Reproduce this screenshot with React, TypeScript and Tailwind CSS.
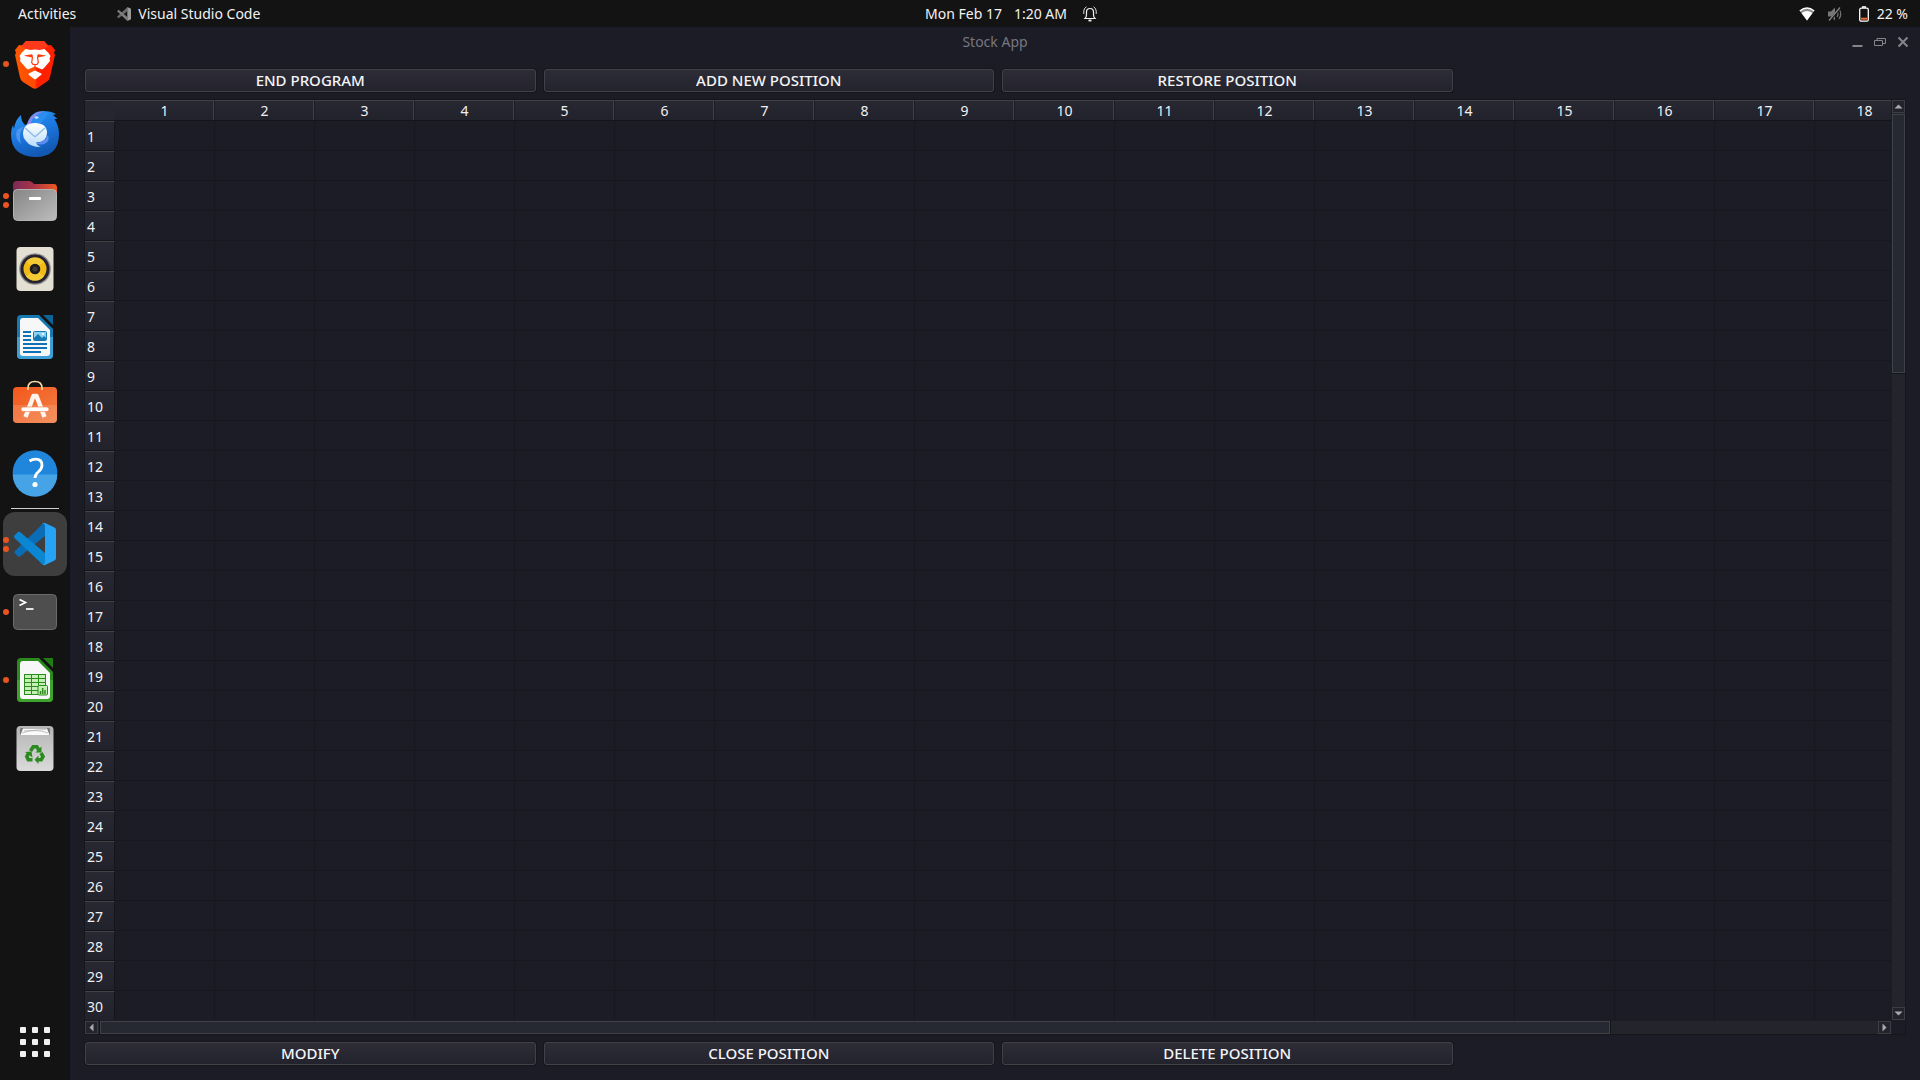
import type { ReactNode } from "react";

const columns = Array.from({ length: 18 }, (_, i) => i + 1);
const rows = Array.from({ length: 30 }, (_, i) => i + 1);

function Icon({ children }: { children: ReactNode }) {
  return (
    <svg viewBox="0 0 48 48" className="size-12 overflow-visible" aria-hidden="true">
      {children}
    </svg>
  );
}

function BraveIcon() {
  return (
    <Icon>
      <defs>
        <linearGradient id="brave" x1="0" x2="1" y1="0" y2="0">
          <stop offset="0.1" stopColor="#ff5500" />
          <stop offset="0.5" stopColor="#ff4a00" />
          <stop offset="0.55" stopColor="#ff2000" />
          <stop offset="1" stopColor="#ff2000" />
        </linearGradient>
      </defs>
      <path
        d="M15 1h18l4 4.500 3-.5 4 5-1 3 1 2-5 22q-.6 3-3 4.500l-9.500 6.500q-2.500 1.500-5 0L12 42q-2.400-1.500-3-4.500L4 15l1-2-1-3 4-5 3 .5z"
        fill="url(#brave)"
      />
      <path d="M15 1h18l4 4.500h2L33 9l-9 1-9-1-6-3.500h2z" fill="#ff3a1c" />
      <path
        d="M14.500 9l5 1q4.500-1 9 0l5-1 4 4 2 3-1 2.500.5 2.500-6 7-2 1.500L24 26.500l-7 3-2-1.500-6-7 .5-2.500-1-2.500 2-3z"
        fill="#fff"
      />
      <path d="M24 30.500l6.300 3q.5.600 0 1.200L25 39q-1 .7-2 0l-5.300-4.300q-.5-.6 0-1.200z" fill="#fff" />
      <path
        d="M13 15.500l8-1.200 1 1.700-.6 1.500-6.400-1.200zM35 15.500l-8-1.200-1 1.700.6 1.500 6.400-1.200z"
        fill="#ff3a0c"
      />
      <path
        d="M21.500 17l-.8 5.500 1.300 2h4l1.300-2-.8-5.500M24 24.500v3"
        fill="none"
        stroke="#ff3a0c"
        strokeWidth="1.200"
      />
    </Icon>
  );
}

function ThunderbirdIcon() {
  return (
    <Icon>
      <defs>
        <linearGradient id="bird" x1="0" x2="0.4" y1="0" y2="1">
          <stop offset="0" stopColor="#2f9bf5" />
          <stop offset="0.55" stopColor="#1b77df" />
          <stop offset="1" stopColor="#1259b4" />
        </linearGradient>
        <linearGradient id="mail" x1="0" x2="0" y1="0" y2="1">
          <stop offset="0" stopColor="#fff" />
          <stop offset="1" stopColor="#b9dcfa" />
        </linearGradient>
      </defs>
      <path
        d="M16 16Q20 3 32 3q8 0 13 3l-3 1 4.500 4h-3q4.500 7 4.500 15 0 23-24 23Q0 48 0 26q0-5 2-9l1 4Q4 12 10 7q0 6 4 10z"
        fill="url(#bird)"
      />
      <path d="M16 17Q20 3 33 3.500 25 6 21 12l-2 6z" fill="#8f86ea" />
      <path d="M20 15Q24 5 34 4l4 1-8 10z" fill="#2b8df0" />
      <path d="M6 22q-3 8 4 14-2-8 0-13l3-5z" fill="#5b9bf0" opacity=".8" />
      <path d="M37 27q-3 8-13 8 6 3 11 0 4-3 2-8z" fill="#5e8cf0" />
      <path d="M12 26q0-11 12-11 12 0 12 10 0 9-11 9.500 1 3 5 4.500-11 0-15-6-3-3-3-7z" fill="url(#mail)" />
      <path d="M14 20l9 8q1 1 2 0l9-8" fill="none" stroke="#8fb9e6" strokeWidth="1.300" />
      <ellipse cx="25.500" cy="9.500" rx="2" ry="1.300" fill="#bfe6ff" />
    </Icon>
  );
}

function FilesIcon() {
  return (
    <Icon>
      <defs>
        <linearGradient id="folder" x1="0" x2="1" y1="0" y2="0">
          <stop offset="0" stopColor="#7b2a55" />
          <stop offset="0.45" stopColor="#a8344a" />
          <stop offset="1" stopColor="#f0591e" />
        </linearGradient>
        <linearGradient id="drawer" x1="0" x2="1" y1="0" y2="1">
          <stop offset="0" stopColor="#858585" />
          <stop offset="1" stopColor="#bdbdbd" />
        </linearGradient>
      </defs>
      <path d="M2 9q0-4 4-4h12q2 0 3.500 1.500L23 8h20q3 0 3 4v10H2z" fill="url(#folder)" />
      <rect x="2.500" y="13.500" width="43" height="31" rx="4" fill="url(#drawer)" stroke="#b4b4b4" />
      <rect x="18" y="21" width="12" height="3" rx="1" fill="#fff" />
    </Icon>
  );
}

function RhythmboxIcon() {
  return (
    <Icon>
      <rect x="5.500" y="3" width="37" height="44" rx="4" fill="#e4dfd3" />
      <circle cx="24" cy="25" r="15.800" fill="#8d8c8c" />
      <circle cx="24" cy="25" r="14.500" fill="#25232f" />
      <circle cx="24" cy="25" r="11.500" fill="#f0bb17" />
      <path d="M24 25L15 17.500a11.500 11.500 0 0 1 18 0zM24 25l9 7.500a11.500 11.500 0 0 1-18 0z" fill="#f9d64a" opacity=".6" />
      <circle cx="24" cy="25" r="5.300" fill="#1d1c1c" />
      <circle cx="24" cy="25" r="2.500" fill="#3e3c3c" />
    </Icon>
  );
}

function WriterIcon() {
  return (
    <Icon>
      <path d="M10 3h18l14 14v26q0 4-4 4H10q-4 0-4-4V7q0-4 4-4z" fill="#1679b3" />
      <path d="M6 25h36v18q0 4-4 4H10q-4 0-4-4z" fill="#3d9fd6" />
      <path d="M12 6h15l12 12v23q0 3-3 3H12q-3 0-3-3V9q0-3 3-3z" fill="#f7f7f7" />
      <path d="M32 3h10v10z" fill="#0d6496" />
      <path d="M12 20h8M12 24h8M12 28h8M12 32h24M12 36h24M12 40h18" stroke="#0d72b8" strokeWidth="2" />
      <rect x="22.500" y="19.500" width="13" height="9" rx="1" fill="#8bd0f5" stroke="#1679b3" />
      <path d="M23 28v-2l4-4 4 4 2-2 2 2v2z" fill="#1679b3" />
      <circle cx="32" cy="22" r="1" fill="#fff" />
    </Icon>
  );
}

function SoftwareIcon() {
  return (
    <Icon>
      <defs>
        <linearGradient id="bag" x1="0" x2="1" y1="0" y2="1">
          <stop offset="0" stopColor="#f4571c" />
          <stop offset="1" stopColor="#f08045" />
        </linearGradient>
      </defs>
      <rect x="2" y="7" width="44" height="36" rx="4" fill="url(#bag)" />
      <path d="M2 25h44v14q0 4-4 4H6q-4 0-4-4z" fill="#fff" opacity=".13" />
      <path d="M17 10V8q0-6.500 7-6.500T31 8v2" fill="none" stroke="#f7dba5" strokeWidth="1.600" />
      <path d="M14.500 37l8-21h3l8 21" fill="none" stroke="#fff4ee" strokeWidth="4.500" strokeLinejoin="round" />
      <rect x="10" y="27" width="28" height="4.500" rx="2.200" fill="#fff" stroke="#f2743c" strokeWidth=".6" />
    </Icon>
  );
}

function HelpIcon() {
  return (
    <Icon>
      <circle cx="24" cy="24.500" r="22.300" fill="#2086dc" />
      <path d="M1.700 26.500h44.600A22.300 22.300 0 0 1 1.700 26.500z" fill="#45a3e6" />
      <path
        d="M18.500 13q3-1.800 6-1.800 6.500 0 6.500 6 0 3.600-3.800 6.800-3.200 2.700-3.200 6"
        fill="none"
        stroke="#fff"
        strokeWidth="2.800"
      />
      <circle cx="24" cy="36.500" r="2.600" fill="#fff" />
    </Icon>
  );
}

function CodeIcon() {
  return (
    <Icon>
      <path d="M3 32l4 4.500q1 .7 2 0L34 16V3.500L31.500 4z" fill="#0a6db5" />
      <path d="M3 16l4-4q1-.7 2 0L34 33v12l-3-1L3.500 18q-1-1 0-2z" fill="#0a86d3" />
      <path d="M34 3l9.500 4.500q1.500.8 1.500 2.500v28q0 1.700-1.500 2.500L34 45q-2 .5-3-1 3 1 3-2V6q0-3-3-2 1-1.500 3-1z" fill="#27a3f5" />
    </Icon>
  );
}

function TerminalIcon() {
  return (
    <Icon>
      <rect x="2.500" y="6.500" width="43" height="35" rx="4" fill="#4e4e4e" stroke="#6b6b6b" />
      <path d="M8.500 11.500l6 3-6 3" fill="none" stroke="#fff" strokeWidth="1.700" />
      <path d="M15 21h7.500" stroke="#fff" strokeWidth="1.700" />
    </Icon>
  );
}

function CalcIcon() {
  return (
    <Icon>
      <path d="M10 2h18l14 14v26q0 4-4 4H10q-4 0-4-4V6q0-4 4-4z" fill="#2a8a1c" />
      <path d="M6 24h36v18q0 4-4 4H10q-4 0-4-4z" fill="#3da32b" />
      <path d="M12 5h15l12 12v23q0 3-3 3H12q-3 0-3-3V8q0-3 3-3z" fill="#f7f7f7" />
      <path d="M32 2h10v10z" fill="#1f7d14" />
      <rect x="13.500" y="18.500" width="21" height="20" fill="#c4f0b5" stroke="#2a8a1c" />
      <path d="M13 22.500h22M13 26.500h22M13 30.500h22M13 34.500h22M20.500 18v21M27.500 18v21" stroke="#2a8a1c" />
      <rect x="27" y="29.500" width="9.500" height="9.500" rx="1" fill="#c4f0b5" stroke="#2a8a1c" />
      <path d="M29.500 38v-3M31.700 38v-6M34 38v-4" stroke="#2a8a1c" strokeWidth="1.500" />
    </Icon>
  );
}

function TrashIcon() {
  return (
    <Icon>
      <defs>
        <linearGradient id="bin" x1="0" x2="0" y1="0" y2="1">
          <stop offset="0" stopColor="#b5b5b5" />
          <stop offset="1" stopColor="#dadada" />
        </linearGradient>
      </defs>
      <rect x="5.500" y="2" width="37" height="45" rx="4" fill="url(#bin)" />
      <path d="M10 4h28q1 0 1 1.500V11H9V5.500Q9 4 10 4z" fill="#777" />
      <path d="M12 4.500h24l2.500 6.500h-29z" fill="#fafafa" />
      <path d="M13 7l22-1.500M11 9q13-5 26 0" fill="none" stroke="#aaa" strokeWidth=".7" />
      <g fill="none" stroke="#2b8a20" strokeWidth="3.600">
        <path d="M19.500 27l2.700-4.200h3.600l2.200 3.500" />
        <path d="M30 29l2 3.500-1.800 3.300H27" />
        <path d="M21.500 35.800h-4.200L15.800 32.500l2-3.500" />
      </g>
      <g fill="#2b8a20">
        <path d="M30.500 22.500v6h-6z" />
        <path d="M27.500 31.500V40l-4-4.200z" />
        <path d="M14 28l6.500-.5 1 6z" />
      </g>
    </Icon>
  );
}

type DockApp = { name: string; icon: ReactNode; windows: number; active?: boolean };

const pinned: DockApp[] = [
  { name: "Brave", icon: <BraveIcon />, windows: 1 },
  { name: "Thunderbird", icon: <ThunderbirdIcon />, windows: 0 },
  { name: "Files", icon: <FilesIcon />, windows: 2 },
  { name: "Rhythmbox", icon: <RhythmboxIcon />, windows: 0 },
  { name: "LibreOffice Writer", icon: <WriterIcon />, windows: 0 },
  { name: "Ubuntu Software", icon: <SoftwareIcon />, windows: 0 },
  { name: "Help", icon: <HelpIcon />, windows: 0 },
];

const running: DockApp[] = [
  { name: "Visual Studio Code", icon: <CodeIcon />, windows: 2, active: true },
  { name: "Terminal", icon: <TerminalIcon />, windows: 1 },
  { name: "LibreOffice Calc", icon: <CalcIcon />, windows: 1 },
  { name: "Trash", icon: <TrashIcon />, windows: 0 },
];

function DockItem({ app }: { app: DockApp }) {
  return (
    <button
      type="button"
      aria-label={app.name}
      className={
        app.active
          ? "relative my-0.5 flex size-16 items-center justify-center rounded-xl bg-[#3e3e3e]"
          : "relative my-0.5 flex size-16 items-center justify-center rounded-xl"
      }
    >
      <span className="absolute inset-y-0 left-0 flex flex-col justify-center gap-[3px]">
        {Array.from({ length: app.windows }, (_, i) => (
          <span key={i} className="size-1.5 rounded-full bg-[#e95420]" />
        ))}
      </span>
      {app.icon}
    </button>
  );
}

function Dock() {
  return (
    <nav aria-label="Dock" className="flex w-[70px] shrink-0 flex-col items-center bg-[#131313] pt-[3px] pb-1">
      {pinned.map((app) => (
        <DockItem key={app.name} app={app} />
      ))}
      <div className="my-px h-0.5 w-12 border-b border-[#d0d0d0]" />
      {running.map((app) => (
        <DockItem key={app.name} app={app} />
      ))}
      <button type="button" aria-label="Show Applications" className="mt-auto grid size-[68px] grid-cols-3 place-content-center gap-1.5 px-[19px]">
        {Array.from({ length: 9 }, (_, i) => (
          <span key={i} className="size-1.5 rounded-[1px] bg-[#f0f0ee]" />
        ))}
      </button>
    </nav>
  );
}

function TopBar() {
  return (
    <header className="flex h-[27px] shrink-0 items-center bg-[#131313] text-sm text-[#f2f2f2]">
      <div className="flex flex-1 items-center pl-[18px]">
        <button type="button">Activities</button>
        <button type="button" className="ml-10 flex items-center gap-1.5">
          <svg viewBox="0 0 48 48" className="size-4" aria-hidden="true">
            <path d="M3 32l5 5L34 16V3.500z" fill="#6a6a6a" />
            <path d="M3 16l5-5 26 22v12z" fill="#7c7c7c" />
            <path d="M34 3l11 5v32l-11 5z" fill="#9a9a9a" />
          </svg>
          Visual Studio Code
        </button>
      </div>
      <button type="button" className="flex items-center pl-24">
        <span>Mon Feb 17</span>
        <span className="ml-3">1:20 AM</span>
        <svg viewBox="0 0 14 16" className="ml-4 h-4 w-3.5" fill="none" stroke="#f2f2f2" aria-hidden="true">
          <path d="M2 12.500q1.500-1.500 1.500-4V6q0-3.500 3.500-3.500T10.500 6v2.500q0 2.500 1.500 4z" strokeWidth="1.200" />
          <path d="M5.500 14.500h3" strokeWidth="1.800" />
          <path d="M.8 8V5Q1 2 3.500.8M13.200 8V5Q13 2 10.500.8" strokeWidth=".9" />
        </svg>
      </button>
      <div className="flex flex-1 items-center justify-end pr-3">
        <button type="button" aria-label="System menu" className="flex items-center">
          <svg viewBox="0 0 16 14" className="h-3.5 w-4" aria-hidden="true">
            <path d="M8 13.500L.8 4Q8-2 15.200 4z" fill="#8a8a8a" />
            <path d="M8 13.500L2.500 6Q8 2 13.500 6z" fill="#fff" />
            <path d="M.8 4Q8-2 15.200 4" fill="none" stroke="#fff" strokeWidth="1.500" />
          </svg>
          <svg viewBox="0 0 16 16" className="ml-3 size-4" aria-hidden="true">
            <path d="M1 5.500h3l4-4v13l-4-4H1z" fill="#777" />
            <path d="M10 5q2 3 0 6M12 3q3.500 5 0 10" fill="none" stroke="#777" strokeWidth="1.200" />
            <path d="M2.500 15L13 2" stroke="#131313" strokeWidth="2.600" />
            <path d="M2 14.500L13 1.500" stroke="#888" strokeWidth="1.200" />
          </svg>
          <svg viewBox="0 0 10 16" className="ml-4 h-4 w-2.5" aria-hidden="true">
            <rect x=".7" y="2.200" width="8.600" height="13" rx="1.500" fill="none" stroke="#fff" strokeWidth="1.300" />
            <path d="M3 1h4" stroke="#fff" strokeWidth="1.600" />
            <path d="M2 12.700h6" stroke="#f26a2a" strokeWidth="2" />
          </svg>
          <span className="ml-2">22 %</span>
        </button>
      </div>
    </header>
  );
}

function ActionRow({ labels }: { labels: string[] }) {
  return (
    <div className="grid shrink-0 grid-cols-[901fr_901fr_901fr_889fr] gap-2">
      {labels.map((label) => (
        <button
          key={label}
          type="button"
          className="flex h-[23px] items-center justify-center rounded-[3px] border border-[#41414a] bg-linear-to-b from-[#2d2c37] to-[#23232d] text-[15px] font-medium text-[#f4f4f6] shadow-[0_0_0_1px_#16161d]"
        >
          {label}
        </button>
      ))}
    </div>
  );
}

function ArrowButton({ label, path }: { label: string; path: string }) {
  return (
    <button
      type="button"
      aria-label={label}
      className="flex size-[13px] shrink-0 items-center justify-center border border-[#3d3d45] bg-[#22232d]"
    >
      <svg viewBox="0 0 9 9" className="size-[9px] shrink-0" aria-hidden="true">
        <path d={path} fill="#a9a9ae" />
      </svg>
    </button>
  );
}

function Sheet() {
  return (
    <div className="grid min-h-0 flex-1 grid-cols-[minmax(0,1fr)_13px] grid-rows-[minmax(0,1fr)_13px] gap-px shadow-[0_0_0_1px_#16161d]">
      <div className="overflow-hidden">
        <table className="w-[1830px] table-fixed border-separate border-spacing-0 text-sm text-[#f0f0f2]">
          <thead>
            <tr>
              <td className="h-[21px] w-[30px] border-t border-b border-t-[#41414a] border-b-[#14141b] bg-[#262630] p-0" />
              {columns.map((n) => (
                <th
                  key={n}
                  scope="col"
                  className="h-[21px] w-[100px] border-t border-r border-b border-t-[#41414a] border-r-[#1c1c25] border-b-[#14141b] bg-linear-to-b from-[#282832] to-[#22222c] p-0 text-center leading-[19px] font-normal shadow-[inset_-1px_0_0_#41414a]"
                >
                  {n}
                </th>
              ))}
            </tr>
          </thead>
          <tbody>
            {rows.map((r) => (
              <tr key={r}>
                <th
                  scope="row"
                  className="h-[30px] border-t border-r border-b border-t-[#41414a] border-r-[#14141b] border-b-[#14141b] bg-linear-to-b from-[#282832] to-[#22222c] p-0 pt-0.5 pl-0.5 text-left leading-[26px] font-normal"
                >
                  {r}
                </th>
                {columns.map((c) => (
                  <td key={c} className="border-r border-b border-[#17171f] p-0" />
                ))}
              </tr>
            ))}
          </tbody>
        </table>
      </div>
      <div className="flex flex-col gap-px bg-[#24242d]">
        <ArrowButton label="Scroll up" path="M0.500 6.500h8l-4-4z" />
        <div className="flex flex-1 flex-col">
          <div className="h-[29%] border border-[#41414a] bg-[#262832] shadow-[0_1px_0_#14141b]" />
        </div>
        <ArrowButton label="Scroll down" path="M0.500 2.500h8l-4 4z" />
      </div>
      <div className="flex gap-px bg-[#24242d]">
        <ArrowButton label="Scroll left" path="M6.500 0.500v8l-4-4z" />
        <div className="flex flex-1 border-l border-[#14141b]">
          <div className="w-[85%] border border-[#41414a] bg-[#262832] shadow-[1px_0_0_#14141b]" />
        </div>
        <ArrowButton label="Scroll right" path="M2.500 0.500v8l4-4z" />
      </div>
      <div />
    </div>
  );
}

function WindowControls() {
  return (
    <div className="flex items-center gap-[11px] text-[#85858a]">
      <button type="button" aria-label="Minimize">
        <svg viewBox="0 0 11 12" className="h-3 w-[11px]" aria-hidden="true">
          <path d="M0.500 10h10" stroke="currentColor" strokeWidth="2" />
        </svg>
      </button>
      <button type="button" aria-label="Restore">
        <svg viewBox="0 0 12 12" className="size-3" fill="none" stroke="currentColor" aria-hidden="true">
          <path d="M.5 4.500h8v5h-8zM3 4V2.500h8.500v5H9" strokeWidth="1" />
        </svg>
      </button>
      <button type="button" aria-label="Close">
        <svg viewBox="0 0 12 12" className="size-3" aria-hidden="true">
          <path d="M1.500 1.500l9 9M10.500 1.500l-9 9" stroke="currentColor" strokeWidth="2" />
        </svg>
      </button>
    </div>
  );
}

export default function App() {
  return (
    <div className="flex h-screen flex-col overflow-hidden bg-[#131313] font-['Noto_Sans','Open_Sans',sans-serif]">
      <TopBar />
      <div className="flex min-h-0 flex-1">
        <Dock />
        <main className="flex min-w-0 flex-1 flex-col bg-[#1c1c27]">
          <div className="grid h-[30px] shrink-0 grid-cols-[1fr_auto_1fr] items-center">
            <h1 className="col-start-2 text-sm font-normal text-[#77777e]">Stock App</h1>
            <div className="flex justify-end pr-[11px]">
              <WindowControls />
            </div>
          </div>
          <div className="flex min-h-0 flex-1 flex-col gap-2 px-[15px] pt-3 pb-[15px]">
            <ActionRow labels={["END PROGRAM", "ADD NEW POSITION", "RESTORE POSITION"]} />
            <Sheet />
            <ActionRow labels={["MODIFY", "CLOSE POSITION", "DELETE POSITION"]} />
          </div>
        </main>
      </div>
    </div>
  );
}
